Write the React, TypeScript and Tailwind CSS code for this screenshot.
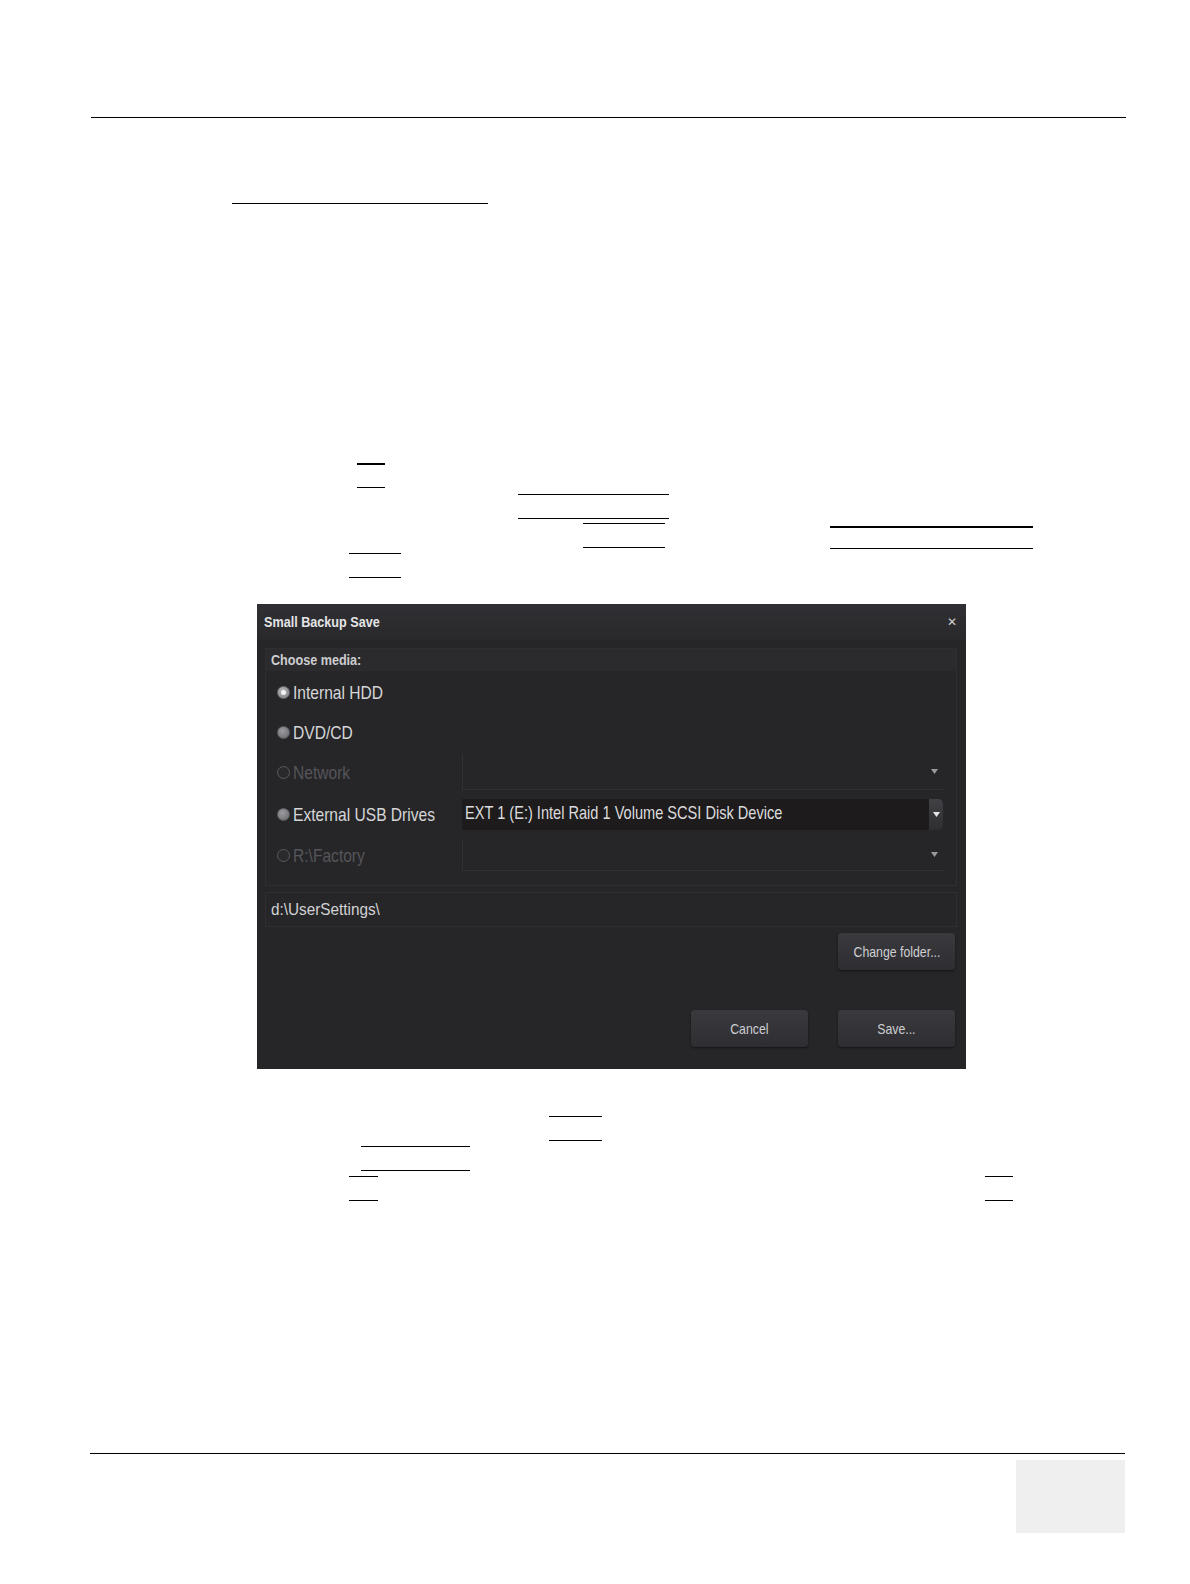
import React from "react";

const ui = "font-['Liberation_Sans',Arial,sans-serif]";

function Narrow({ children, origin = "left", scale = "n" }: { children: React.ReactNode; origin?: "left" | "center"; scale?: "n" | "m" }) {
  const o = origin === "left" ? "origin-left" : "origin-center";
  const s = scale === "n" ? "scale-x-[0.82]" : "scale-x-[0.9]";
  return <span className={`inline-block whitespace-nowrap ${o} ${s}`}>{children}</span>;
}

function Radio({ state }: { state: "on" | "off" | "disabled" }) {
  if (state === "on") {
    return (
      <span className="flex h-[13px] w-[13px] shrink-0 items-center justify-center rounded-full border border-[#6d6d70] bg-[radial-gradient(circle_at_40%_35%,#b8b8bb,#7c7c80)]">
        <span className="h-[5px] w-[5px] rounded-full bg-[#f2f2f2]" />
      </span>
    );
  }
  if (state === "off") {
    return <span className="block h-[13px] w-[13px] shrink-0 rounded-full border border-[#5e5e62] bg-[radial-gradient(circle_at_40%_35%,#9c9ca0,#68686c)]" />;
  }
  return <span className="block h-[13px] w-[13px] shrink-0 rounded-full border border-[#5a5a5e] bg-[#2a2a2d]" />;
}

function Arrow({ color }: { color: string }) {
  return (
    <svg width="7" height="5" viewBox="0 0 7 5">
      <path d="M0 0 L7 0 L3.5 5 Z" fill={color} />
    </svg>
  );
}

function MediaRow({
  label,
  state,
  h,
  dropdown,
}: {
  label: string;
  state: "on" | "off" | "disabled";
  h: string;
  dropdown?: React.ReactNode;
}) {
  return (
    <div className={`flex items-center ${h}`}>
      <div className="flex w-[196px] items-center gap-[3px] pl-[11px]">
        <Radio state={state} />
        <span className={`text-[19px] leading-none ${state === "disabled" ? "text-[#55555a]" : "text-[#d6d6d8]"}`}>
          <Narrow>{label}</Narrow>
        </span>
      </div>
      {dropdown}
    </div>
  );
}

function DisabledDrop({ h }: { h: string }) {
  return (
    <div className={`flex w-[481px] items-center justify-end border-b border-l border-[#313135] pr-[5px] ${h}`}>
      <Arrow color="#9a9a9e" />
    </div>
  );
}

function EnabledDrop() {
  return (
    <div className="flex h-[31px] w-[481px] items-stretch">
      <div className="flex flex-1 items-center overflow-hidden bg-[#1d1b1c] pl-[3px] text-[17.8px] leading-none text-[#dcdcde]">
        <Narrow>EXT 1 (E:) Intel Raid 1 Volume SCSI Disk Device</Narrow>
      </div>
      <div className="flex w-[14px] items-center justify-center rounded-r-[5px] bg-[linear-gradient(#414145,#2e2e31)]">
        <Arrow color="#e6e6e6" />
      </div>
    </div>
  );
}

function Btn({ children }: { children: React.ReactNode }) {
  return (
    <div className="flex h-[37px] w-[117px] items-center justify-center rounded-[4px] bg-[linear-gradient(#3a3a3e,#2e2e32)] text-[15px] leading-none text-[#cfcfd2] shadow-[0_1px_2px_rgba(0,0,0,0.5)]">
      <Narrow origin="center">{children}</Narrow>
    </div>
  );
}

function Dialog() {
  return (
    <div className={`ml-[257px] mt-[26px] flex h-[465px] w-[709px] flex-col overflow-hidden bg-[#262628] ${ui}`}>
      <div className="flex h-[36px] shrink-0 items-center justify-between bg-[linear-gradient(#303034,#29292c)] pl-[7px] pr-[9px]">
        <span className="text-[15.4px] font-bold leading-none text-[#e4e4e6]">
          <Narrow>Small Backup Save</Narrow>
        </span>
        <span className="text-[12px] leading-none text-[#d0d0d0]">✕</span>
      </div>
      <div className="flex flex-1 flex-col pl-[8px] pr-[9px] pt-[8px]">
        <div className="flex flex-col border border-[#2f2f33] bg-[#262628] pb-[10px]">
          <div className="flex h-[22px] items-center bg-[#2b2b2e] pl-[5px] text-[14px] font-bold leading-none text-[#cdcdd0]">
            <Narrow scale="m">Choose media:</Narrow>
          </div>
          <MediaRow label="Internal HDD" state="on" h="h-[42px]" />
          <MediaRow label="DVD/CD" state="off" h="h-[38px]" />
          <MediaRow label="Network" state="disabled" h="h-[42px]" dropdown={<DisabledDrop h="h-[36px]" />} />
          <MediaRow label="External USB Drives" state="off" h="h-[42px]" dropdown={<EnabledDrop />} />
          <MediaRow label="R:\Factory" state="disabled" h="h-[40px]" dropdown={<DisabledDrop h="h-[31px]" />} />
        </div>
        <div className="mt-[6px] flex h-[35px] items-center border border-[#2f2f33] pl-[5px] text-[17px] leading-none text-[#d2d2d4]">
          <Narrow scale="m">d:\UserSettings\</Narrow>
        </div>
        <div className="mt-[6px] flex justify-end pr-[2px]">
          <Btn>Change folder...</Btn>
        </div>
        <div className="mt-[40px] flex justify-end gap-[30px] pr-[2px]">
          <Btn>Cancel</Btn>
          <Btn>Save...</Btn>
        </div>
      </div>
    </div>
  );
}

export default function App() {
  return (
    <div className="flex h-[1584px] w-full flex-col overflow-hidden bg-white">
      <div className="ml-[91px] mt-[117px] h-px w-[1035px] bg-black" />
      <div className="ml-[232px] mt-[85px] h-px w-[256px] bg-black" />

      <div className="ml-[357px] mt-[259px] h-[2px] w-[28px] bg-black" />
      <div className="ml-[357px] mt-[22px] h-px w-[28px] bg-black" />
      <div className="ml-[518px] mt-[6px] h-px w-[151px] bg-black" />
      <div className="ml-[518px] mt-[23px] h-px w-[151px] bg-black" />
      <div className="ml-[583px] mt-[4px] h-px w-[82px] bg-black" />
      <div className="ml-[830px] mt-[2px] h-[2px] w-[203px] bg-black" />
      <div className="ml-[583px] mt-[19px] h-px w-[82px] bg-black" />
      <div className="ml-[830px] h-px w-[203px] bg-black" />
      <div className="ml-[349px] mt-[4px] h-px w-[52px] bg-black" />
      <div className="ml-[349px] mt-[23px] h-px w-[52px] bg-black" />

      <Dialog />

      <div className="ml-[549px] mt-[47px] h-px w-[53px] bg-black" />
      <div className="ml-[549px] mt-[23px] h-px w-[53px] bg-black" />
      <div className="ml-[361px] mt-[5px] h-px w-[109px] bg-black" />
      <div className="ml-[361px] mt-[23px] h-px w-[109px] bg-black" />
      <div className="ml-[349px] mt-[5px] flex w-[664px] justify-between">
        <div className="h-px w-[29px] bg-black" />
        <div className="h-px w-[28px] bg-black" />
      </div>
      <div className="ml-[349px] mt-[23px] flex w-[664px] justify-between">
        <div className="h-px w-[29px] bg-black" />
        <div className="h-px w-[28px] bg-black" />
      </div>

      <div className="ml-[90px] mt-[252px] h-px w-[1035px] bg-black" />
      <div className="ml-[1016px] mt-[6px] h-[73px] w-[109px] bg-[#efefef]" />
    </div>
  );
}
